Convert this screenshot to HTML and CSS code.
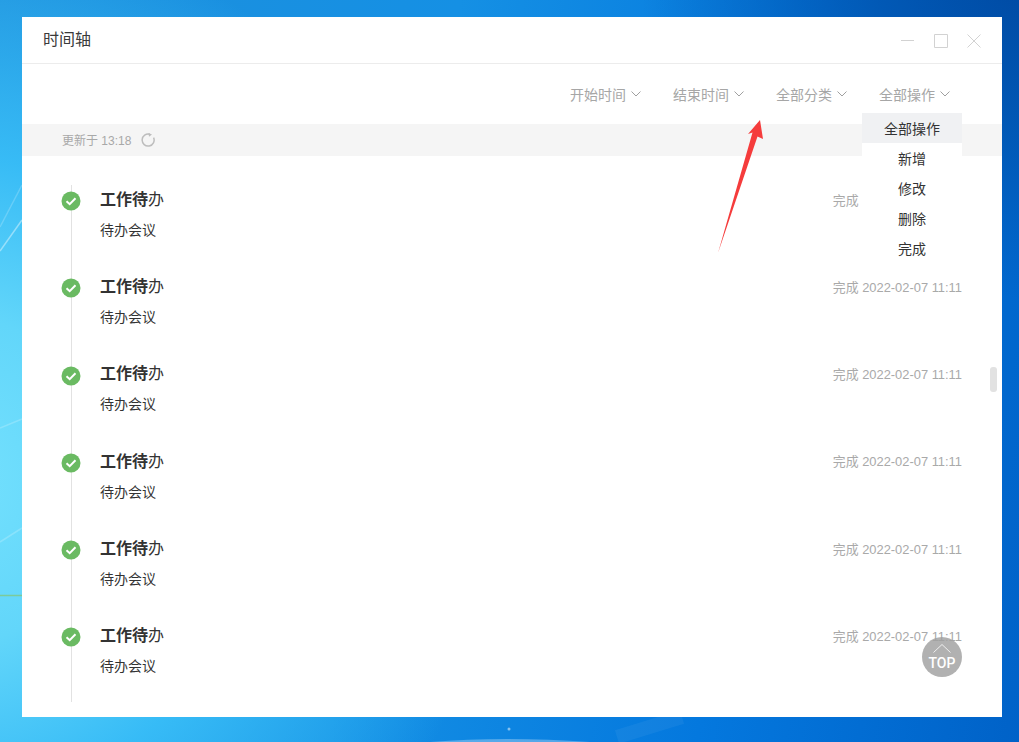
FILE: index.html
```html
<!DOCTYPE html>
<html lang="zh-CN">
<head>
<meta charset="utf-8">
<title>时间轴</title>
<link rel="stylesheet" href="styles.css">
</head>
<body>
<svg class="streaks" viewBox="0 0 1019 742" aria-hidden="true">
  <path class="streak" d="M0 227 L22 185" />
  <path class="streak strong" d="M0 251 L22 220" />
  <path class="streak" d="M0 428 L22 419" />
  <path class="streak" d="M0 542 L22 528" />
  <path class="green" d="M0 595.5 H22" />
  <path class="glow" d="M430 742 Q505 736 590 742 Z" />
  <path class="flare" d="M617 737 L682 717" />
  <circle class="dot" cx="509" cy="729" r="1.500" />
</svg>
<main class="window">
  <header class="titlebar">
    <h1 class="title">时间轴</h1>
    <div class="controls">
      <svg class="ctl" viewBox="0 0 14 14"><path d="M0 6.500H13"/></svg>
      <svg class="ctl" viewBox="0 0 14 14"><path d="M.5.5H13.500V13.500H.5Z"/></svg>
      <svg class="ctl" viewBox="0 0 14 14"><path d="M.5.5L13.500 13.500M13.500.5L.5 13.500"/></svg>
    </div>
  </header>
  <div class="toolbar">
    <div class="filter">开始时间<svg class="chev" viewBox="0 0 10 6"><path d="M.5.5L5 5L9.500.5"/></svg></div>
    <div class="filter">结束时间<svg class="chev" viewBox="0 0 10 6"><path d="M.5.5L5 5L9.500.5"/></svg></div>
    <div class="filter">全部分类<svg class="chev" viewBox="0 0 10 6"><path d="M.5.5L5 5L9.500.5"/></svg></div>
    <div class="filter has-menu">全部操作<svg class="chev" viewBox="0 0 10 6"><path d="M.5.5L5 5L9.500.5"/></svg>
      <ul class="menu">
        <li class="menu-item active">全部操作</li>
        <li class="menu-item">新增</li>
        <li class="menu-item">修改</li>
        <li class="menu-item">删除</li>
        <li class="menu-item">完成</li>
      </ul>
    </div>
  </div>
  <div class="status">
    <span class="status-text">更新于 13:18</span>
    <svg class="refresh" viewBox="0 0 14 14"><path d="M8.800 1.300A6 6 0 1 0 12.600 4.600"/><path class="tip" d="M7.500 0L11 1.600L8 3.700Z"/></svg>
  </div>
  <ol class="timeline">
    <li class="item">
      <svg class="mark" viewBox="0 0 20 20"><circle cx="10" cy="10" r="9.500"/><path d="M5.500 10.200L8.700 13.200L14.500 7.300"/></svg>
      <div class="row"><h2 class="item-title"><b>工作待</b>办</h2><time class="date">完成 2022-02-07 11:11</time></div>
      <p class="desc">待办会议</p>
    </li>
    <li class="item">
      <svg class="mark" viewBox="0 0 20 20"><circle cx="10" cy="10" r="9.500"/><path d="M5.500 10.200L8.700 13.200L14.500 7.300"/></svg>
      <div class="row"><h2 class="item-title"><b>工作待</b>办</h2><time class="date">完成 2022-02-07 11:11</time></div>
      <p class="desc">待办会议</p>
    </li>
    <li class="item">
      <svg class="mark" viewBox="0 0 20 20"><circle cx="10" cy="10" r="9.500"/><path d="M5.500 10.200L8.700 13.200L14.500 7.300"/></svg>
      <div class="row"><h2 class="item-title"><b>工作待</b>办</h2><time class="date">完成 2022-02-07 11:11</time></div>
      <p class="desc">待办会议</p>
    </li>
    <li class="item">
      <svg class="mark" viewBox="0 0 20 20"><circle cx="10" cy="10" r="9.500"/><path d="M5.500 10.200L8.700 13.200L14.500 7.300"/></svg>
      <div class="row"><h2 class="item-title"><b>工作待</b>办</h2><time class="date">完成 2022-02-07 11:11</time></div>
      <p class="desc">待办会议</p>
    </li>
    <li class="item">
      <svg class="mark" viewBox="0 0 20 20"><circle cx="10" cy="10" r="9.500"/><path d="M5.500 10.200L8.700 13.200L14.500 7.300"/></svg>
      <div class="row"><h2 class="item-title"><b>工作待</b>办</h2><time class="date">完成 2022-02-07 11:11</time></div>
      <p class="desc">待办会议</p>
    </li>
    <li class="item">
      <svg class="mark" viewBox="0 0 20 20"><circle cx="10" cy="10" r="9.500"/><path d="M5.500 10.200L8.700 13.200L14.500 7.300"/></svg>
      <div class="row"><h2 class="item-title"><b>工作待</b>办</h2><time class="date">完成 2022-02-07 11:11</time></div>
      <p class="desc">待办会议</p>
    </li>
  </ol>
  <div class="scroll-thumb"></div>
  <div class="top-btn">
    <svg class="top-chev" viewBox="0 0 18 9"><path d="M.5 8.500L9 .5L17.500 8.500"/></svg>
    <span class="top-text">TOP</span>
  </div>
  <svg class="arrow" viewBox="0 0 1019 742" aria-hidden="true"><path d="M760 120L748 134L752.500 132.500L718 253L757.500 136.500L763 139Z"/></svg>
</main>
</body>
</html>
```

FILE: styles.css
```css
* { box-sizing: border-box; }
html, body { height: 100%; }
body {
  margin: 0;
  padding: 17px 17px 25px 22px;
  overflow: hidden;
  position: relative;
  font-family: "Liberation Sans", "Noto Sans CJK SC", sans-serif;
  background:
    radial-gradient(ellipse 420px 330px at 1060px -30px, #0048a0 0%, rgba(0,80,170,.75) 45%, rgba(0,90,190,0) 100%),
    radial-gradient(ellipse 560px 560px at -60px 480px, #76e2fe 0%, #62d6fa 30%, rgba(60,195,250,.85) 58%, rgba(40,165,245,0) 100%),
    linear-gradient(100deg, #1e90dc 0%, #1590e4 40%, #0478de 72%, #0062c8 100%);
}
.streaks { position: absolute; inset: 0; width: 100%; height: 100%; }
.streak { stroke: rgba(255,255,255,.2); stroke-width: 1.500; fill: none; }
.strong { stroke: rgba(255,255,255,.42); }
.green { stroke: #7ccb9a; stroke-width: 1.500; }
.glow { fill: rgba(255,255,255,.3); }
.flare { stroke: rgba(255,255,255,.05); stroke-width: 14; fill: none; }
.dot { fill: rgba(255,255,255,.5); }

.window {
  position: relative;
  height: 700px;
  background: #fff;
  color: #333;
  display: flex;
  flex-direction: column;
}
.titlebar {
  height: 47px;
  flex: none;
  border-bottom: 1px solid #ececec;
  display: flex;
  align-items: center;
  justify-content: space-between;
  padding: 0 21px;
}
.title { margin: 0 0 4px; font-size: 16px; font-weight: 400; color: #3a3a3a; }
.controls { display: flex; gap: 19px; margin-top: 2px; }
.ctl { width: 14px; height: 14px; fill: none; stroke: #d2d2d2; stroke-width: 1; }

.toolbar {
  height: 60px;
  flex: none;
  display: flex;
  justify-content: flex-end;
  align-items: center;
  gap: 32px;
  padding: 0 52px 0 0;
}
.filter { font-size: 14px; color: #a6a6a6; display: flex; align-items: center; position: relative; white-space: nowrap; }
.chev { width: 10px; height: 6px; margin-left: 5px; fill: none; stroke: #a0a0a0; stroke-width: 1; }
.menu {
  position: absolute;
  top: 29px;
  right: -12px;
  width: 100px;
  margin: 0;
  padding: 0;
  list-style: none;
  background: #fff;
  z-index: 3;
}
.menu-item { height: 30px; line-height: 32px; text-align: center; font-size: 14px; color: #333; }
.menu-item.active { background: #f0f1f3; }

.status {
  height: 32px;
  flex: none;
  background: #f5f5f5;
  padding-left: 40px;
  display: flex;
  align-items: center;
  gap: 10px;
  font-size: 12px;
  color: #a8a8a8;
}
.status-text { margin-bottom: 2px; }
.refresh { width: 14px; height: 14px; fill: none; stroke: #bdbdbd; stroke-width: 1.500; }
.refresh .tip { fill: #bdbdbd; stroke: none; }

.timeline { list-style: none; margin: 29px 0 0 49px; padding: 0; }
.item {
  position: relative;
  height: 87.300px;
  border-left: 1px solid #e2e2e2;
  padding: 5px 40px 0 28px;
}
.item:last-child { height: 81px; }
.mark { position: absolute; left: -11px; top: 6px; width: 20px; height: 20px; }
.mark circle { fill: #6aba62; }
.mark path { fill: none; stroke: #fff; stroke-width: 2; }
.row { display: flex; justify-content: space-between; align-items: center; height: 18px; }
.item-title { margin: 0 0 2.500px; font-size: 16px; font-weight: 400; color: #333; }
.item-title b { font-weight: 700; }
.date { font-size: 12.900px; color: #a9a9a9; }
.desc { margin: 12.750px 0 0; font-size: 14px; line-height: 18px; color: #333; }

.scroll-thumb {
  position: absolute;
  left: 968px;
  top: 350px;
  width: 7px;
  height: 25px;
  border-radius: 3px;
  background: #e2e2e2;
}
.top-btn {
  position: absolute;
  left: 900px;
  top: 620px;
  width: 40px;
  height: 40px;
  border-radius: 50%;
  background: rgba(160,160,160,.82);
  display: flex;
  flex-direction: column;
  align-items: center;
  color: #fff;
}
.top-chev { width: 18px; height: 9px; margin-top: 7px; fill: none; stroke: #eee; stroke-width: 1; flex: none; }
.top-text { font-family: Roboto, "Liberation Sans", sans-serif; font-size: 14px; font-weight: 500; line-height: 15px; margin-top: 3px; }
.arrow { position: absolute; left: -22px; top: -17px; width: 1019px; height: 742px; z-index: 4; pointer-events: none; }
.arrow path { fill: #f53c3c; }
```
